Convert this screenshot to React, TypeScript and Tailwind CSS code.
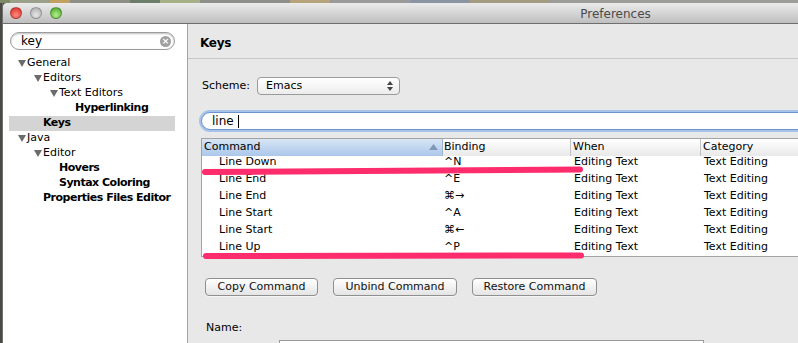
import React from 'react';

type TreeNode = { label: string; level: number; expanded?: boolean; bold?: boolean; selected?: boolean };

const tree: TreeNode[] = [
  { label: 'General', level: 0, expanded: true },
  { label: 'Editors', level: 1, expanded: true },
  { label: 'Text Editors', level: 2, expanded: true },
  { label: 'Hyperlinking', level: 3, bold: true },
  { label: 'Keys', level: 1, bold: true, selected: true },
  { label: 'Java', level: 0, expanded: true },
  { label: 'Editor', level: 1, expanded: true },
  { label: 'Hovers', level: 2, bold: true },
  { label: 'Syntax Coloring', level: 2, bold: true },
  { label: 'Properties Files Editor', level: 1, bold: true },
];

const indent = ['pl-[9px]', 'pl-[25px]', 'pl-[41px]', 'pl-[57px]'];

const bindings = [
  ['Line Down', '^N'],
  ['Line End', '^E'],
  ['Line End', '⌘→'],
  ['Line Start', '^A'],
  ['Line Start', '⌘←'],
  ['Line Up', '^P'],
];

const Triangle = () => (
  <svg width="8" height="7" viewBox="0 0 8 7" className="shrink-0">
    <polygon points="0,0 8,0 4,7" fill="#6b6b6b" />
  </svg>
);

const Light = ({ cls }: { cls: string }) => (
  <div className={`w-[12px] h-[12px] rounded-full border border-black/25 ${cls}`} />
);

const Button = ({ label, w }: { label: string; w: string }) => (
  <div
    className={`${w} h-[18px] rounded-[4px] border border-[#8f8f8f] bg-gradient-to-b from-white to-[#e4e4e4] flex items-center justify-center pt-px text-[#111] shadow-[0_1px_0_rgba(255,255,255,0.6)]`}
  >
    {label}
  </div>
);

export default function App() {
  return (
    <div className="relative w-[798px] h-[343px] overflow-hidden bg-[#4a4a44] flex flex-col font-['DejaVu_Sans',sans-serif] text-[11px] text-black">
      {/* desktop behind the window */}
      <div className="h-[3px] flex shrink-0">
        <div className="w-[10px] bg-[#7d8a66]" />
        <div className="w-[40px] bg-[#9aa08a]" />
        <div className="w-[20px] bg-[#c2a062]" />
        <div className="w-[60px] bg-[#8d8f86]" />
        <div className="w-[30px] bg-[#6c7d6a]" />
        <div className="w-[40px] bg-[#a7b188]" />
        <div className="w-[90px] bg-[#8e8e8a]" />
        <div className="w-[40px] bg-[#b6a37a]" />
        <div className="w-[80px] bg-[#9a9a9a]" />
        <div className="w-[60px] bg-[#8b94a2]" />
        <div className="w-[80px] bg-[#a39b82]" />
        <div className="flex-1 bg-[#9c9c98]" />
      </div>

      <div className="ml-[2px] w-[1226px] flex-1 flex flex-col min-h-0 border-l border-[#6f6f6f]">
        {/* title bar */}
        <div className="h-[21px] shrink-0 flex items-center rounded-tl-[4px] bg-gradient-to-b from-[#ebebeb] to-[#bfbfbf] border-b border-[#6e6e6e]">
          <div className="w-[60px] pl-[7px] flex items-center gap-[8px]">
            <Light cls="bg-[radial-gradient(circle_at_50%_70%,#ff8c80,#d8261f)]" />
            <Light cls="bg-[radial-gradient(circle_at_50%_70%,#e6e6e6,#a9a9a9)]" />
            <Light cls="bg-[radial-gradient(circle_at_50%_70%,#b4f08c,#3f9e1e)]" />
          </div>
          <div className="flex-1 text-center text-[12px] pt-px text-[#4a4a4a]">Preferences</div>
          <div className="w-[60px]" />
        </div>

        <div className="flex-1 flex min-h-0">
          {/* sidebar */}
          <div className="w-[185px] shrink-0 bg-white border-r border-[#a3a3a3] flex flex-col">
            <div className="mt-[8px] ml-[7px] w-[165px] h-[18px] rounded-full border border-[#9c9c9c] shadow-[inset_0_1px_2px_rgba(0,0,0,0.25)] flex items-center pl-[10px] pr-[3px]">
              <span className="flex-1 text-[12px]">key</span>
              <div className="w-[11px] h-[11px] rounded-full bg-[#a0a0a0] flex items-center justify-center text-white text-[9px] leading-none font-bold">
                ×
              </div>
            </div>
            <div className="mt-[6px] ml-[6px] mr-[12px] flex flex-col">
              {tree.map((n, i) => (
                <div
                  key={i}
                  className={`h-[15px] flex items-center ${indent[n.level]} ${n.selected ? 'bg-[#d4d4d4]' : ''}`}
                >
                  <div className="w-[9px] shrink-0">{n.expanded && <Triangle />}</div>
                  <span className={n.bold ? 'font-bold tracking-[-0.5px]' : ''}>{n.label}</span>
                </div>
              ))}
            </div>
          </div>

          {/* main panel */}
          <div className="flex-1 bg-[#e8e8e8] flex flex-col">
            <div className="h-[35px] shrink-0 border-b border-[#c6c6c6] pl-[12px] pt-[3px] flex items-center font-bold text-[12px] tracking-[-0.3px]">
              Keys
            </div>

            <div className="mt-[18px] pl-[14px] flex items-center">
              <span className="w-[55px]">Scheme:</span>
              <div className="w-[143px] h-[18px] rounded-[4px] border border-[#9a9a9a] bg-gradient-to-b from-white to-[#ececec] flex items-center pl-[8px] pr-[6px]">
                <span className="flex-1">Emacs</span>
                <svg width="6" height="10" viewBox="0 0 6 10">
                  <polygon points="3,0 6,4 0,4" fill="#444" />
                  <polygon points="0,6 6,6 3,10" fill="#444" />
                </svg>
              </div>
            </div>

            <div className="mt-[17px] ml-[13px] mr-[13px] h-[18px] rounded-l-full bg-white border border-[#6d93c8] ring-2 ring-[#a7c3ea] flex items-center pl-[10px] text-[12px]">
              line
              <span className="ml-[4px] w-px h-[13px] bg-black" />
            </div>

            {/* bindings table */}
            <div className="mt-[8px] ml-[13px] mr-[13px] bg-white border border-[#a3a3a3]">
              <div className="grid grid-cols-[241px_128px_130px_1fr] h-[15px] border-b border-[#b3b3b3]">
                <div className="pl-[2px] pr-[4px] flex items-center bg-gradient-to-b from-[#d8e6f6] to-[#abc7ea] border-r border-[#9fb4cf]">
                  <span className="flex-1">Command</span>
                  <svg width="9" height="6" viewBox="0 0 9 6">
                    <polygon points="4.5,0 9,6 0,6" fill="#7f98b8" />
                  </svg>
                </div>
                <div className="pl-[1px] flex items-center bg-gradient-to-b from-white to-[#e9e9e9] border-r border-[#c3c3c3]">Binding</div>
                <div className="pl-[2px] flex items-center bg-gradient-to-b from-white to-[#e9e9e9] border-r border-[#c3c3c3]">When</div>
                <div className="pl-[2px] flex items-center bg-gradient-to-b from-white to-[#e9e9e9]">Category</div>
              </div>
              {bindings.map(([cmd, key], i) => (
                <div key={i} className="grid grid-cols-[241px_128px_130px_1fr] h-[17px] items-center">
                  <span className="pl-[17px]">{cmd}</span>
                  <span className="pl-[1px]">{key}</span>
                  <span className="pl-[3px]">Editing Text</span>
                  <span className="pl-[3px]">Text Editing</span>
                </div>
              ))}
            </div>

            <div className="mt-[21px] ml-[17px] flex gap-[15px]">
              <Button label="Copy Command" w="w-[113px]" />
              <Button label="Unbind Command" w="w-[124px]" />
              <Button label="Restore Command" w="w-[125px]" />
            </div>

            <div className="mt-[25px] pl-[18px] flex items-start">
              <span className="w-[73px] h-[15px] flex items-center">Name:</span>
              <div className="mt-[19px] w-[425px] h-[20px] bg-white border-t border-x border-[#9a9a9a]" />
            </div>
          </div>
        </div>
      </div>

      {/* pink annotation strokes drawn over the screenshot */}
      <svg className="absolute inset-0 pointer-events-none" width="798" height="343">
        <path d="M205 172 L580 169.5" stroke="#fd2c6c" strokeWidth="6" strokeLinecap="round" fill="none" />
        <path d="M206 256 L581 255.5" stroke="#fd2c6c" strokeWidth="6" strokeLinecap="round" fill="none" />
      </svg>
    </div>
  );
}
